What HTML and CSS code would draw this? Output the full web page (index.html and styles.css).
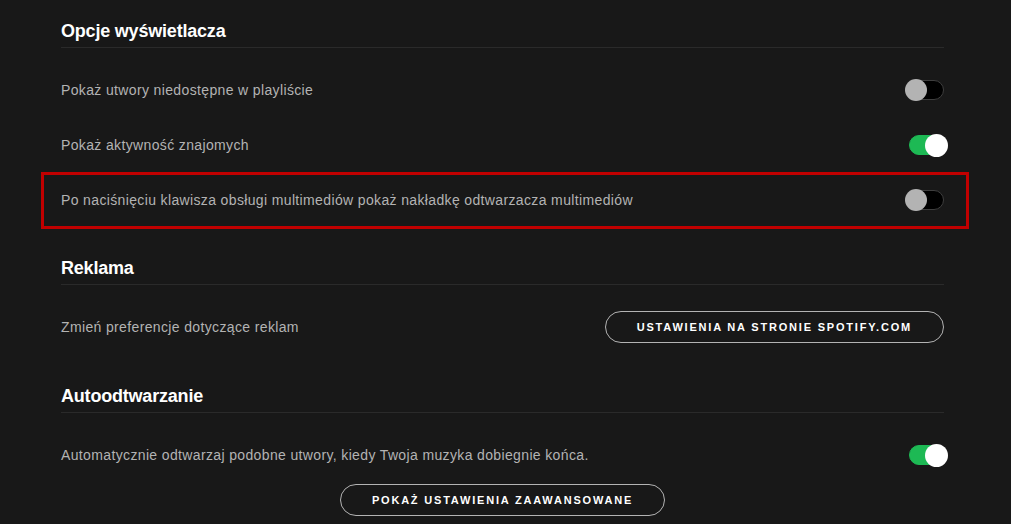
FILE: index.html
```html
<!DOCTYPE html>
<html lang="pl">
<head>
<meta charset="utf-8">
<title>Ustawienia</title>
<link rel="stylesheet" href="styles.css">
</head>
<body>
<main class="settings">
  <section class="section first">
    <h2 class="section-title">Opcje wyświetlacza</h2>
    <div class="rows">
      <div class="row">
        <span class="label">Pokaż utwory niedostępne w playliście</span>
        <span class="toggle"><span class="knob"></span></span>
      </div>
      <div class="row">
        <span class="label">Pokaż aktywność znajomych</span>
        <span class="toggle on"><span class="knob"></span></span>
      </div>
      <div class="row highlight">
        <span class="label">Po naciśnięciu klawisza obsługi multimediów pokaż nakładkę odtwarzacza multimediów</span>
        <span class="toggle"><span class="knob"></span></span>
      </div>
    </div>
  </section>
  <section class="section ads">
    <h2 class="section-title">Reklama</h2>
    <div class="rows">
      <div class="row">
        <span class="label">Zmień preferencje dotyczące reklam</span>
        <button class="pill">USTAWIENIA NA STRONIE SPOTIFY.COM</button>
      </div>
    </div>
  </section>
  <section class="section auto">
    <h2 class="section-title">Autoodtwarzanie</h2>
    <div class="rows">
      <div class="row">
        <span class="label">Automatycznie odtwarzaj podobne utwory, kiedy Twoja muzyka dobiegnie końca.</span>
        <span class="toggle on"><span class="knob"></span></span>
      </div>
    </div>
  </section>
  <div class="more">
    <button class="pill">POKAŻ USTAWIENIA ZAAWANSOWANE</button>
  </div>
</main>
</body>
</html>
```

FILE: styles.css
```css
html, body {
  margin: 0;
  padding: 0;
  background: #181818;
  height: 100%;
  overflow: hidden;
}
body {
  font-family: "Liberation Sans", Arial, sans-serif;
  color: #b3b3b3;
}
.settings {
  width: 883px;
  margin-left: 61px;
  padding-top: 19px;
}
.section + .section {
  margin-top: 29px;
}
.section.auto {
  margin-top: 30px;
}
.section-title {
  margin: 0;
  font-size: 18px;
  line-height: 24px;
  font-weight: 700;
  color: #ffffff;
  padding-bottom: 4px;
  border-bottom: 1px solid #2a2a2a;
  letter-spacing: -0.2px;
}
.rows {
  padding-top: 14px;
}
.row {
  height: 55px;
  display: flex;
  align-items: center;
  justify-content: space-between;
}
.label {
  font-size: 14px;
  line-height: 20px;
  letter-spacing: 0.36px;
}
.highlight {
  position: relative;
}
.highlight::after {
  content: "";
  position: absolute;
  left: -20px;
  right: -25px;
  top: 0;
  bottom: -2px;
  border: 3px solid #c00000;
  pointer-events: none;
}
.toggle {
  position: relative;
  width: 36px;
  height: 18px;
  border: 1px solid #3e3e3e;
  border-radius: 10px;
  background: #000;
  flex: none;
}
.toggle .knob {
  position: absolute;
  left: -2px;
  top: -2px;
  width: 22px;
  height: 22px;
  border-radius: 50%;
  background: #b3b3b3;
}
.toggle.on {
  background: #1db954;
  border-color: #1db954;
  margin-right: -3px;
}
.toggle.on .knob {
  left: auto;
  right: -2px;
  top: -2px;
  width: 23px;
  height: 23px;
  background: #fff;
}
.pill {
  font-family: "Liberation Sans", Arial, sans-serif;
  font-size: 11px;
  font-weight: 700;
  letter-spacing: 1.8px;
  color: #ffffff;
  background: transparent;
  border: 1px solid #b3b3b3;
  border-radius: 16px;
  height: 32px;
  padding: 0 31px;
  line-height: 30px;
  cursor: pointer;
}
.more {
  display: flex;
  justify-content: center;
  margin-top: 2px;
}
```
